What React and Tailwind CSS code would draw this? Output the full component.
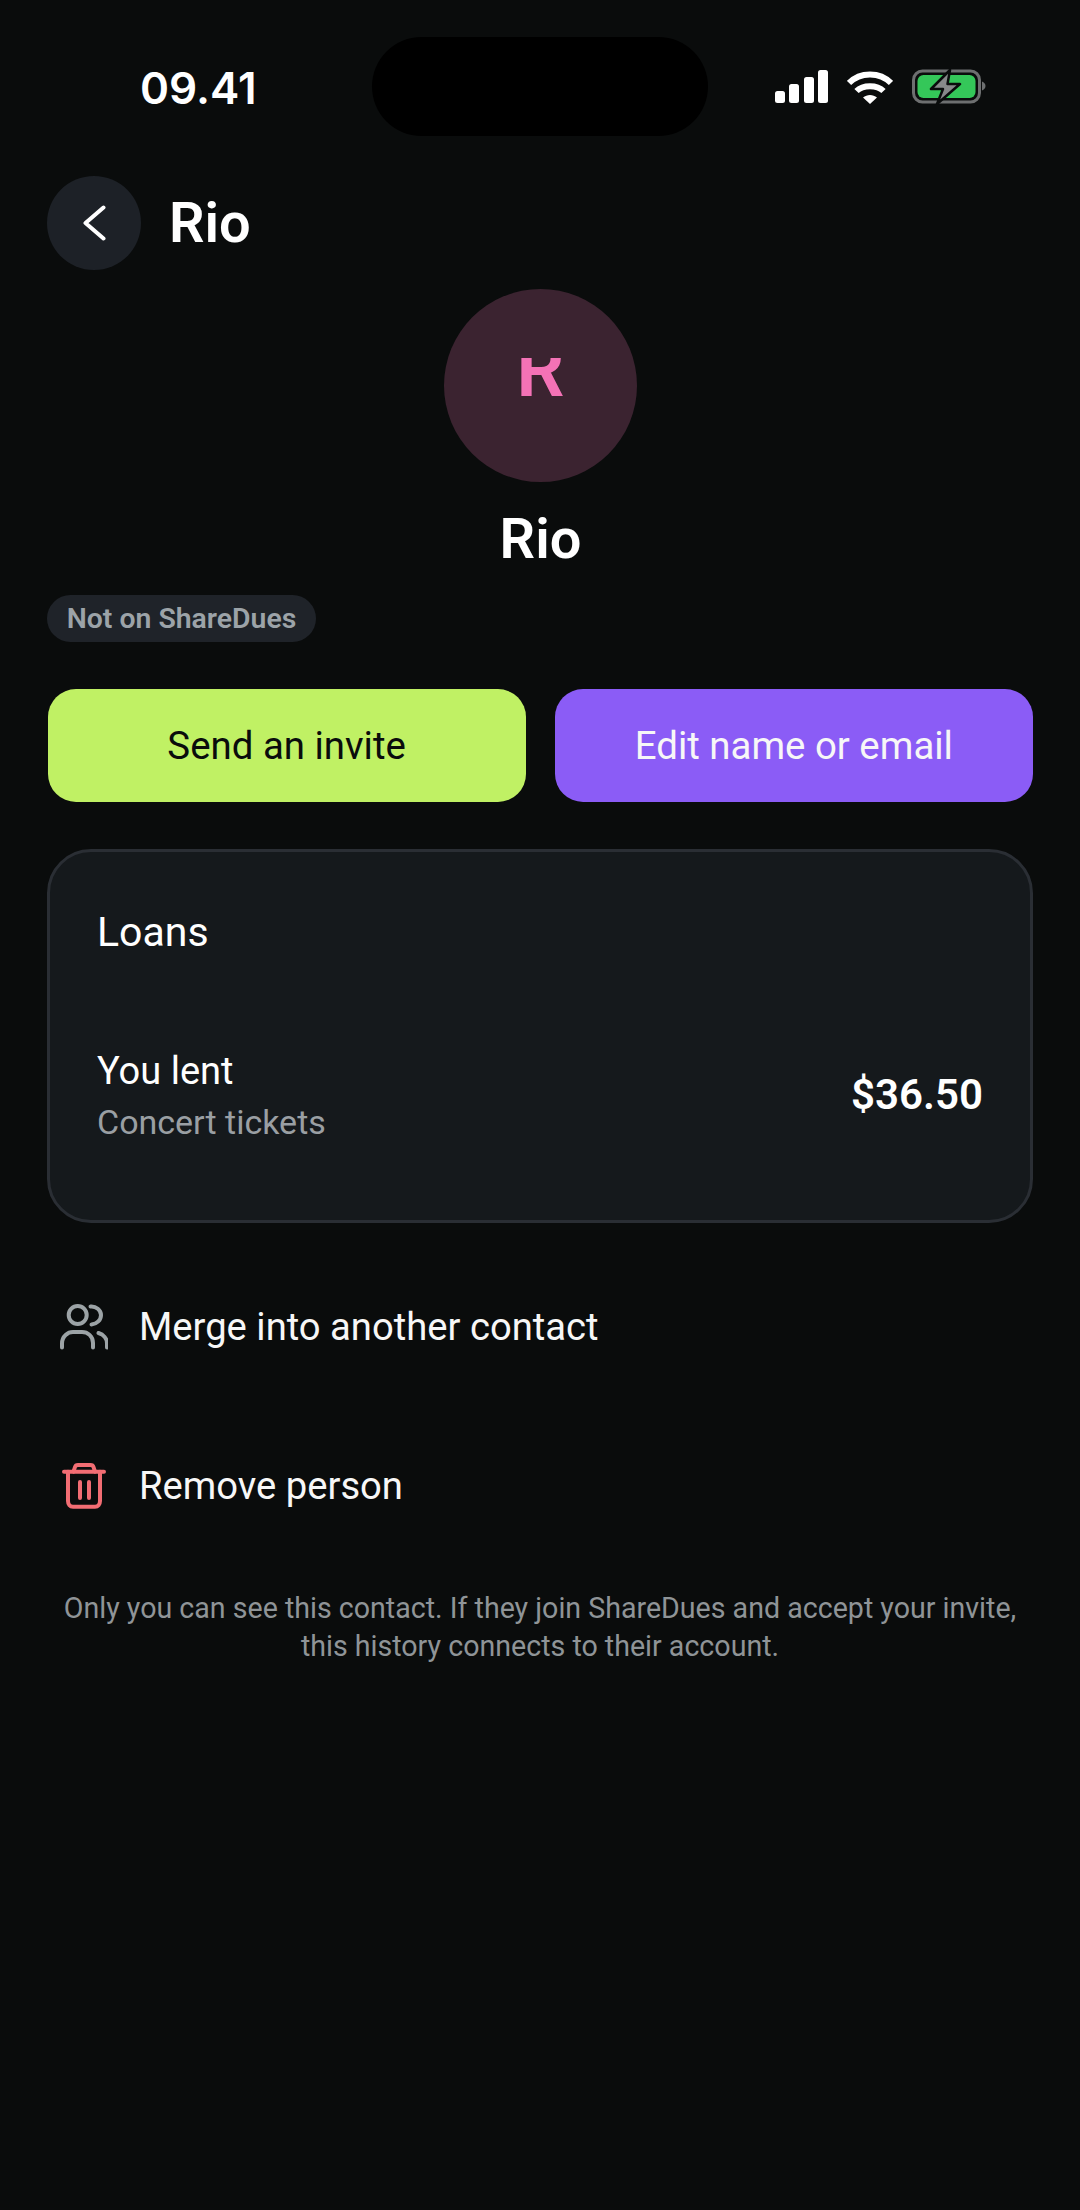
import React from "react";

const sans = "font-['Roboto','Liberation_Sans',sans-serif]";

function Signal() {
  return (
    <svg width="54" height="33" viewBox="0 0 54 33" fill="#fff">
      <rect x="0" y="21" width="10" height="12" rx="2.5" />
      <rect x="14" y="14" width="10" height="19" rx="2.5" />
      <rect x="29" y="7" width="10" height="26" rx="2.5" />
      <rect x="43" y="0" width="10" height="33" rx="2.5" />
    </svg>
  );
}

function Wifi() {
  return (
    <svg width="46" height="34" viewBox="0 0 46 34" fill="none" stroke="#fff" strokeWidth="6" className="ml-[-1px]">
      <path d="M2 13C13 1.500 33 1.500 44 13" />
      <path d="M9.500 21C16 14.500 30 14.500 36.500 21" />
      <path d="M16 27.500 23 34 30 27.500C26 24 20 24 16 27.500Z" fill="#fff" stroke="none" />
    </svg>
  );
}

function Battery() {
  return (
    <svg width="74" height="36" viewBox="0 0 74 36" fill="none">
      <rect x="1.5" y="2" width="66" height="31" rx="9" stroke="#6d6f70" strokeWidth="3" />
      <rect x="5.5" y="6" width="58" height="23" rx="6" fill="#34c759" />
      <path d="M70 12.5c2 .8 3.5 2.5 3.5 4.5s-1.5 3.7-3.5 4.5z" fill="#6d6f70" />
      <path d="M38 1 19 20h12l-6 15 23-20H35.500z" fill="#87898a" stroke="#0a0c0c" strokeWidth="2.500" strokeLinejoin="round" />
    </svg>
  );
}

function UsersIcon() {
  return (
    <svg width="48" height="48" viewBox="0 0 48 48" fill="none" stroke="#9ca3a6" strokeWidth="4" strokeLinecap="round">
      <circle cx="17.700" cy="12" r="9" />
      <path d="M2 44.500v-4C2 33 8 29 13 29h9c5.500 0 11 4 11 11v4.500" />
      <path d="M30.500 3.500c5.500-.5 10.500 3.500 10.500 8.500s-4 9-9.500 9.500" />
      <path d="M38.500 30c5 1.500 8.500 5.500 8.500 10.500v4" />
    </svg>
  );
}

function TrashIcon() {
  return (
    <svg width="44" height="46" viewBox="0 0 44 46" fill="none" stroke="#f26d73" strokeWidth="4" strokeLinecap="round" strokeLinejoin="round" className="ml-[2px]">
      <path d="M2 8.700h40" />
      <path d="M11.500 8.700 13 4c.4-1.300 1.200-2 3-2h12.500c1.800 0 2.600.7 3 2l1.500 4.700" />
      <path d="M6 8.700V38c0 3.500 2 5.700 5 5.700h22c3 0 5-2.200 5-5.700V8.700" />
      <path d="M18 19v16M27 19v16" />
    </svg>
  );
}

function ActionRow({ icon, label, className }) {
  return (
    <div className={`flex items-center px-[47px] ${className}`}>
      <div className="flex w-[92px] justify-start pl-[13px]">{icon}</div>
      <span className="text-[38.2px] leading-[48px] text-[#f7f7f7]">{label}</span>
    </div>
  );
}

export default function App() {
  return (
    <div className={`${sans} w-[1080px] h-[2210px] bg-[#0a0c0c] overflow-hidden flex flex-col`}>
      {/* status bar */}
      <div className="flex items-center h-[99px] mt-[37px] pl-[140px] pr-[94px]">
        <span className="w-[232px] pt-[2px] font-['Inter',sans-serif] font-semibold text-[44px] leading-none text-white">09.41</span>
        <div className="w-[336px] h-[99px] rounded-full bg-black" />
        <div className="ml-auto flex items-center gap-[19px]">
          <Signal />
          <Wifi />
          <Battery />
        </div>
      </div>

      {/* header */}
      <div className="flex items-center gap-[28px] mt-[40px] px-[47px]">
        <button className="flex h-[94px] w-[94px] items-center justify-center rounded-full bg-[#1d2127]">
          <svg width="23" height="36" viewBox="0 0 23 36" fill="none" stroke="#fff" strokeWidth="4" strokeLinecap="round" strokeLinejoin="round">
            <path d="M20.500 2.500 2.500 18l18 15.500" />
          </svg>
        </button>
        <h1 className="text-[56px] leading-[64px] font-semibold text-white">Rio</h1>
      </div>

      {/* avatar */}
      <div className="flex flex-col items-center mt-[19px] pl-[1px]">
        <div className="flex h-[193px] w-[193px] justify-center rounded-full bg-[#3b2330] pt-[69px]">
          <div className="h-[40px] overflow-hidden">
            <div className="mt-[-16px] text-[76px] leading-[56px] font-semibold text-[#f472b6]">R</div>
          </div>
        </div>
        <div className="mt-[25px] text-[56px] leading-[64px] font-semibold text-white">Rio</div>
      </div>

      {/* not on app chip */}
      <div className="mt-[24px] px-[47px]">
        <span className="inline-flex h-[47px] w-[269px] items-center justify-center rounded-full bg-[#1f2329] pt-[2px] text-[28.4px] font-semibold text-[#9ca3a8]">
          Not on ShareDues
        </span>
      </div>

      {/* buttons */}
      <div className="mt-[47px] grid grid-cols-2 gap-[29px] pl-[47.5px] pr-[47px]">
        <button className="h-[113px] rounded-[28px] bg-[#c0f164] text-[38.4px] text-[#0a0c0c]">Send an invite</button>
        <button className="h-[113px] rounded-[28px] bg-[#8b5cf6] text-[38.4px] text-[#f7f7f7]">Edit name or email</button>
      </div>

      {/* loans card */}
      <div className="mt-[47px] mx-[47px] h-[374px] rounded-[44px] border-[3px] border-[#2a2e34] bg-[#15191c] px-[47px] pt-[55px]">
        <div className="text-[41px] leading-[50px] text-white">Loans</div>
        <div className="mt-[89px] flex items-center justify-between">
          <div>
            <div className="text-[38px] leading-[50px] text-white">You lent</div>
            <div className="mt-[1px] text-[34px] leading-[50px] text-[#9a9fa3]">Concert tickets</div>
          </div>
          <div className="pb-[4px] text-[42px] font-semibold text-white">$36.50</div>
        </div>
      </div>

      <ActionRow className="mt-[80px]" icon={<UsersIcon />} label="Merge into another contact" />
      <ActionRow className="mt-[111px]" icon={<TrashIcon />} label="Remove person" />

      <p className="mt-[79px] px-[47px] text-center text-[28.6px] leading-[38px] text-[#8f9497]">
        Only you can see this contact. If they join ShareDues and accept your invite,
        <br />
        this history connects to their account.
      </p>
    </div>
  );
}
